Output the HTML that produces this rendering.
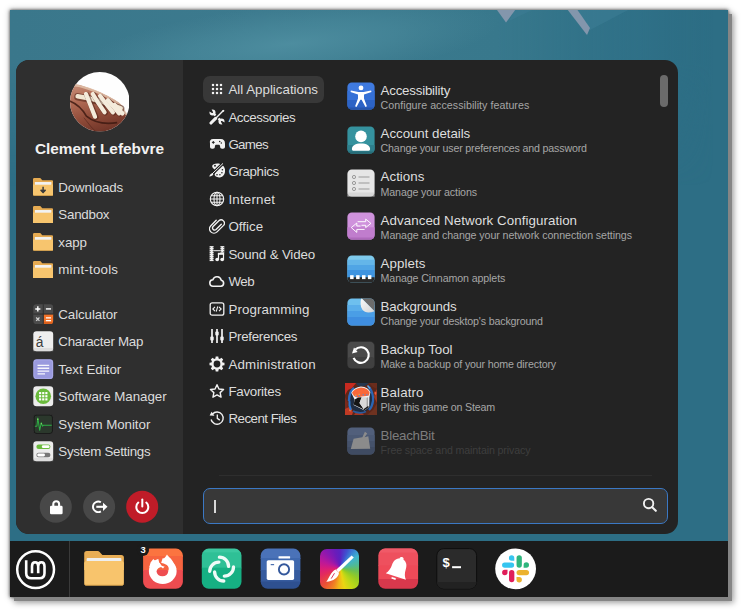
<!DOCTYPE html><html><head><meta charset="utf-8"><title>Cinnamon Menu</title><style>html,body{margin:0;padding:0}
body{width:744px;height:613px;background:#fff;position:relative;overflow:hidden;font-family:"Liberation Sans",sans-serif;}
#shot{position:absolute;left:10px;top:10px;width:718px;height:587px;overflow:hidden;background:#2d6e85;box-shadow:4px 4px 0 #858585,5px 5px 6px 1px rgba(0,0,0,.35),0 0 3px 0 rgba(0,0,0,.7),0 0 6px 1px rgba(0,0,0,.22);}
#abs{position:absolute;left:-10px;top:-10px;width:744px;height:613px}
#abs>*{position:absolute}
#menu{left:16px;top:60px;width:662px;height:474px;border-radius:13px;background:#232323;overflow:hidden}
#side{position:absolute;left:0;top:0;width:167px;height:474px;background:#2f2f2f}
#uname{left:16px;width:167px;top:140px;height:18px;line-height:18px;text-align:center;font-weight:bold;font-size:15.4px;color:#f2f2f2;white-space:nowrap}
.srow{left:33px;height:27.5px;line-height:27.5px;font-size:13.33px;color:#dcdcdc;white-space:nowrap}
.srow svg{position:absolute;left:0;top:3.5px}
.srow span{position:absolute;left:25.3px;top:0.6px}
.crow{left:203px;width:121px;height:27px;line-height:27px;font-size:13.33px;color:#dcdcdc;white-space:nowrap;border-radius:7px}
.crow.sel{background:#383838}
.crow svg{position:absolute;left:5.6px;top:5.6px}
.crow span{position:absolute;left:25.4px;top:0.6px}
.arow{left:344px;width:310px;height:43.2px;color:#dedede;white-space:nowrap}
.arow svg{position:absolute;left:2.5px;top:7.3px}
.arow .t{position:absolute;left:36.6px;top:8px;font-size:13.33px;line-height:15px}
.arow .d{position:absolute;left:36.6px;top:24.2px;font-size:10.67px;line-height:12px;color:#a6a6a6}
.arow.fade .t{color:#7d7d7d}
.arow.fade .d{color:#3e3e3e}
.arow.fade svg{opacity:.6}
#scroll{left:659.7px;top:75.3px;width:8px;height:31.7px;border-radius:4px;background:#6b6b6b}
#sep{left:218.6px;top:475px;width:433px;height:1px;background:#2e2e2e}
#search{left:203px;top:488px;width:463px;height:34px;border:1px solid #3b78c4;border-radius:7px;background:#383838}
#caret{position:absolute;left:10.3px;top:11px;width:1.3px;height:12.5px;background:#d8d8d8}
#search svg{position:absolute;right:7.8px;top:7.4px}
#panel{left:10px;top:541px;width:718px;height:56px;background:#1b1b1b}
#psep{position:absolute;left:59px;top:0;width:1px;height:56px;background:#3a3a3a}
</style></head><body>
<div id="shot"><div id="abs">
<svg style="left:10px;top:10px" width="718" height="587" viewBox="10 10 718 587">
<defs>
<linearGradient id="wg" x1="0" x2="1" y1="0" y2="0"><stop offset="0" stop-color="#3a778b"/><stop offset=".35" stop-color="#3c7a8e"/><stop offset=".68" stop-color="#38788c"/><stop offset=".88" stop-color="#307188" stop-opacity=".7"/><stop offset=".98" stop-color="#2d6e85" stop-opacity="0"/></linearGradient>
<linearGradient id="wv" x1="0" x2="0" y1="0" y2="1"><stop offset="0" stop-color="#fff"/><stop offset=".09" stop-color="#fff"/><stop offset=".3" stop-color="#000"/></linearGradient>
<filter id="wb" x="-20%" y="-20%" width="140%" height="140%"><feGaussianBlur stdDeviation=".45"/></filter>
<mask id="wm"><rect x="10" y="10" width="718" height="587" fill="url(#wv)"/></mask>
<radialGradient id="wl" cx="0.5" cy="0.5" r="0.5"><stop offset="0" stop-color="#4f8fa1" stop-opacity=".9"/><stop offset=".5" stop-color="#4b8b9d" stop-opacity=".55"/><stop offset="1" stop-color="#4a8799" stop-opacity="0"/></radialGradient>
</defs>
<rect x="10" y="10" width="718" height="587" fill="#2d6e85"/>
<rect x="10" y="10" width="718" height="587" fill="url(#wg)" mask="url(#wm)"/>
<ellipse cx="290" cy="44" rx="210" ry="40" fill="url(#wl)" transform="rotate(-6 290 44)"/>
<path d="M577.5 10L628 10L590 30Z" fill="#41809a" opacity=".45"/>
<path d="M515 10L532 10L509 21Z" fill="#41809a" opacity=".35"/>
<path d="M497 10L515.2 10L506 22.6Z" fill="#8396ac" filter="url(#wb)"/>
<path d="M567.8 10L577.5 10L590 28L587 35Z" fill="#8396ac" filter="url(#wb)"/>
</svg>
<div id="menu"><div id="side"></div></div>
<svg style="left:69.5px;top:72.3px" width="59.6" height="59.6" viewBox="0 0 60 60">
<defs><clipPath id="ac"><circle cx="30" cy="30" r="30"/></clipPath>
<linearGradient id="ab" x1="0.2" y1="0" x2="0.6" y2="1"><stop offset="0" stop-color="#c48a74"/><stop offset=".3" stop-color="#b06a54"/><stop offset=".65" stop-color="#8e4a38"/><stop offset="1" stop-color="#6c3226"/></linearGradient></defs>
<g clip-path="url(#ac)">
<rect width="60" height="60" fill="#fefefe"/>
<path d="M-2 11.5Q10 12.5 19 16T30.2 20.5T41.5 26.2T52.8 35.2T60 48V62H-2Z" fill="url(#ab)"/>
<path d="M-2 12.5Q10 13.5 19 17T30.2 21.5T41.5 27.2T52.8 36.2T59 46" stroke="#e2c4ac" stroke-width="2.2" fill="none" opacity=".8"/>
<path d="M-1 29Q10 33 16.5 44.5Q28 54 47.5 51" stroke="#3e1a12" stroke-width="1.7" fill="none" opacity=".85"/>
<path d="M14 46Q22 57 28 62" stroke="#4a2018" stroke-width="1" fill="none" opacity=".5"/>
<path d="M8 25Q30 28.5 51 37" stroke="#4a2016" stroke-width="7.5" fill="none" stroke-linecap="round" opacity=".55"/>
<path d="M7.7 24.5Q30 28 51 36.5" stroke="#f1e6d2" stroke-width="4.6" fill="none" stroke-linecap="round"/>
<g stroke="#4a2016" stroke-width="5.6" stroke-linecap="round" fill="none" opacity=".5">
<path d="M17 23Q21 33 26 45.5"/><path d="M24 23Q29 32 35.5 41"/><path d="M31 25Q37 33 44 41"/><path d="M39 29.5Q44 35 50 42"/>
</g>
<g stroke="#f4ebdb" stroke-width="4.2" stroke-linecap="round" fill="none">
<path d="M16.1 22.2Q20 32 25.2 45"/><path d="M22.9 22.2Q28 31 34.8 40.6"/><path d="M30.2 24Q36 32 43.2 40.6"/><path d="M38.1 28.4Q43 34 49.4 41.6"/><path d="M44.9 33Q48.5 37 52.8 41.8"/>
</g>
</g></svg>
<div id="uname">Clement Lefebvre</div>
<div class="srow" style="top:173.25px"><svg width="20.2" height="17.8" viewBox="0 0 20 17.6" style="top:4.9px">
<path d="M0 1.3Q0 0 1.3 0H7.2L9.2 2.2H18.7Q20 2.2 20 3.5V9H0Z" fill="#e6ab52"/>
<rect x="1.9" y="4.1" width="16.2" height="3" fill="#f2f2f2"/>
<path d="M0 6.3H20V16.3Q20 17.6 18.7 17.6H1.3Q0 17.6 0 16.3Z" fill="#f7c56e"/>
<rect x="1.9" y="4.1" width="16.2" height="2.2" fill="#f2f2f2"/>
<path d="M0 16.3Q0 17.6 1.3 17.6H18.7Q20 17.6 20 16.3V16.6Q20 17 18.7 17H1.3Q0 17 0 16.6Z" fill="#d9a044"/>
<path d="M10 8.6v5.2M7.6 11.8l2.4 2.4 2.4-2.4" stroke="#3b3b3b" stroke-width="1.5" fill="none"/><path d="M7.2 11.6h5.6L10 14.8z" fill="#3b3b3b"/></svg><span style="letter-spacing:-0.139px">Downloads</span></div>
<div class="srow" style="top:200.75px"><svg width="20.2" height="17.8" viewBox="0 0 20 17.6" style="top:4.9px">
<path d="M0 1.3Q0 0 1.3 0H7.2L9.2 2.2H18.7Q20 2.2 20 3.5V9H0Z" fill="#e6ab52"/>
<rect x="1.9" y="4.1" width="16.2" height="3" fill="#f2f2f2"/>
<path d="M0 6.3H20V16.3Q20 17.6 18.7 17.6H1.3Q0 17.6 0 16.3Z" fill="#f7c56e"/>
<rect x="1.9" y="4.1" width="16.2" height="2.2" fill="#f2f2f2"/>
<path d="M0 16.3Q0 17.6 1.3 17.6H18.7Q20 17.6 20 16.3V16.6Q20 17 18.7 17H1.3Q0 17 0 16.6Z" fill="#d9a044"/>
</svg><span style="letter-spacing:-0.232px">Sandbox</span></div>
<div class="srow" style="top:228.25px"><svg width="20.2" height="17.8" viewBox="0 0 20 17.6" style="top:4.9px">
<path d="M0 1.3Q0 0 1.3 0H7.2L9.2 2.2H18.7Q20 2.2 20 3.5V9H0Z" fill="#e6ab52"/>
<rect x="1.9" y="4.1" width="16.2" height="3" fill="#f2f2f2"/>
<path d="M0 6.3H20V16.3Q20 17.6 18.7 17.6H1.3Q0 17.6 0 16.3Z" fill="#f7c56e"/>
<rect x="1.9" y="4.1" width="16.2" height="2.2" fill="#f2f2f2"/>
<path d="M0 16.3Q0 17.6 1.3 17.6H18.7Q20 17.6 20 16.3V16.6Q20 17 18.7 17H1.3Q0 17 0 16.6Z" fill="#d9a044"/>
</svg><span style="letter-spacing:-0.077px">xapp</span></div>
<div class="srow" style="top:255.75px"><svg width="20.2" height="17.8" viewBox="0 0 20 17.6" style="top:4.9px">
<path d="M0 1.3Q0 0 1.3 0H7.2L9.2 2.2H18.7Q20 2.2 20 3.5V9H0Z" fill="#e6ab52"/>
<rect x="1.9" y="4.1" width="16.2" height="3" fill="#f2f2f2"/>
<path d="M0 6.3H20V16.3Q20 17.6 18.7 17.6H1.3Q0 17.6 0 16.3Z" fill="#f7c56e"/>
<rect x="1.9" y="4.1" width="16.2" height="2.2" fill="#f2f2f2"/>
<path d="M0 16.3Q0 17.6 1.3 17.6H18.7Q20 17.6 20 16.3V16.6Q20 17 18.7 17H1.3Q0 17 0 16.6Z" fill="#d9a044"/>
</svg><span style="letter-spacing:0.212px">mint-tools</span></div>
<div class="srow" style="top:300.25px"><svg width="20.5" height="20.5" viewBox="0 0 20 20"><defs><clipPath id="cc"><rect x=".3" y=".3" width="19.4" height="19.4" rx="3.2"/></clipPath></defs>
<g clip-path="url(#cc)"><rect width="20" height="20" fill="#4b4b4b"/><rect x="10.3" y="10" width="10" height="10.5" fill="#f37329"/><rect x="10.3" y="17.6" width="10" height="3" fill="#d9601c"/>
<path d="M0 9.8H20M10 0V20" stroke="#2a2a2a" stroke-width=".9"/></g>
<g stroke="#fff" stroke-width="1.4" fill="none"><path d="M2.2 4.8h5M4.7 2.3v5"/><path d="M12.6 4.8h5"/></g>
<g stroke="#d0d0d0" stroke-width="1.2" fill="none"><path d="M3.1 13.2l3.2 3.2M6.3 13.2l-3.2 3.2"/></g>
<g stroke="#fff" stroke-width="1.2" fill="none"><path d="M12.6 13.6h5M12.6 16.2h5"/></g></svg><span style="letter-spacing:-0.092px">Calculator</span></div>
<div class="srow" style="top:327.75px"><svg width="20.5" height="20.5" viewBox="0 0 20 20"><rect x=".3" y=".3" width="19.4" height="19.4" rx="3.2" fill="#eeeeee" /><rect x=".3" y="16.5" width="19.4" height="3.2" fill="#cfcfcf" opacity=".55"/><text x="6.5" y="15.6" font-family="Liberation Sans, sans-serif" font-size="13.5" fill="#3c3c3c" text-anchor="middle">á</text></svg><span style="letter-spacing:-0.25px">Character Map</span></div>
<div class="srow" style="top:355.25px"><svg width="20.5" height="20.5" viewBox="0 0 20 20"><rect x=".3" y=".3" width="19.4" height="19.4" rx="3.2" fill="#9a9ade" /><rect x=".9" y=".9" width="18.2" height="18.2" rx="2.7" fill="none" stroke="#b4b4ee" stroke-width=".8" opacity=".7"/><path d="M4.4 6.3h11.4M4.4 9h11.4M4.4 11.8h11.4M4.4 14.5h7.3" stroke="#f6f6fc" stroke-width="1.3"/></svg><span>Text Editor</span></div>
<div class="srow" style="top:382.75px"><svg width="20.5" height="20.5" viewBox="0 0 20 20"><rect x=".3" y=".3" width="19.4" height="19.4" rx="3.2" fill="#ececec" /><circle cx="10" cy="10" r="7.6" fill="#6abb3c"/><g fill="#fff"><rect x="5.9" y="5.9" width="2.1" height="2.1"/><rect x="8.95" y="5.9" width="2.1" height="2.1"/><rect x="12" y="5.9" width="2.1" height="2.1"/><rect x="5.9" y="8.95" width="2.1" height="2.1"/><rect x="8.95" y="8.95" width="2.1" height="2.1"/><rect x="12" y="8.95" width="2.1" height="2.1"/><rect x="5.9" y="12" width="2.1" height="2.1"/><rect x="8.95" y="12" width="2.1" height="2.1"/><rect x="12" y="12" width="2.1" height="2.1"/></g></svg><span style="letter-spacing:-0.038px">Software Manager</span></div>
<div class="srow" style="top:410.25px"><svg width="20.5" height="20.5" viewBox="0 0 20 20"><rect x=".3" y=".3" width="19.4" height="19.4" rx="3.2" fill="#161616" stroke="#3c3c3c" stroke-width=".5"/><rect x="1.5" y="1.5" width="17" height="17" rx="2.2" fill="#2b382c"/><path d="M1.8 11.9h2l.9-8 1.8 12 1.6-7.4 1.2 3.4 1-1H18.3" stroke="#2fae45" stroke-width="1" fill="none" stroke-linejoin="round"/><circle cx="4.7" cy="5.2" r=".7" fill="#8ae06a"/><circle cx="8.1" cy="9.4" r=".6" fill="#8ae06a"/></svg><span style="letter-spacing:-0.042px">System Monitor</span></div>
<div class="srow" style="top:437.75px"><svg width="20.5" height="20.5" viewBox="0 0 20 20"><rect x=".3" y=".3" width="19.4" height="19.4" rx="3.2" fill="#ececec" /><rect x=".3" y="16.5" width="19.4" height="3.2" fill="#cfcfcf" opacity=".45"/><rect x="3.3" y="3.4" width="13.7" height="4.3" rx="2.15" fill="#6abb3c"/><rect x="8.6" y="4.2" width="7.6" height="2.7" rx="1.35" fill="#fff"/><rect x="3.3" y="11.5" width="13.7" height="4.3" rx="2.15" fill="#777"/><rect x="4.1" y="12.3" width="7.6" height="2.7" rx="1.35" fill="#fff"/></svg><span style="letter-spacing:-0.287px">System Settings</span></div>
<svg style="left:36px;top:488px" width="130" height="40" viewBox="36 488 130 40">
<circle cx="55.8" cy="506.8" r="16" fill="#484848"/><circle cx="99.1" cy="506.8" r="16" fill="#484848"/><circle cx="142.2" cy="506.8" r="16" fill="#c01c28"/>
<rect x="50" y="505.8" width="12.6" height="8.4" rx="1.3" fill="#fff"/><path d="M53.3 506.5v-2.4a2.9 2.9 0 0 1 5.8 0v2.4" stroke="#fff" stroke-width="2.1" fill="none"/>
<path d="M100.9 502.2a5.3 5.3 0 1 0 0 9.2" stroke="#fff" stroke-width="1.9" fill="none"/><path d="M96.3 506.8h7.4" stroke="#fff" stroke-width="2.1"/><path d="M103 502.7l4.5 4.1-4.5 4.1z" fill="#fff"/>
<path d="M138.3 502.6a6 6 0 1 0 8 0" stroke="#fff" stroke-width="2" fill="none" stroke-linecap="round"/><path d="M142.3 499.4v7" stroke="#fff" stroke-width="2" stroke-linecap="round"/>
</svg>
<div class="crow sel" style="top:75.5px"><svg width="16" height="16" viewBox="0 0 16 16" fill="#f2f2f2"><rect x="2.9" y="2.9" width="2.2" height="2.2"/><rect x="6.9" y="2.9" width="2.2" height="2.2"/><rect x="10.9" y="2.9" width="2.2" height="2.2"/><rect x="2.9" y="6.9" width="2.2" height="2.2"/><rect x="6.9" y="6.9" width="2.2" height="2.2"/><rect x="10.9" y="6.9" width="2.2" height="2.2"/><rect x="2.9" y="10.9" width="2.2" height="2.2"/><rect x="6.9" y="10.9" width="2.2" height="2.2"/><rect x="10.9" y="10.9" width="2.2" height="2.2"/></svg><span>All Applications</span></div>
<div class="crow" style="top:102.95px"><svg width="16" height="16" viewBox="0 0 16 16" fill="#f2f2f2"><path d="M4.4 4.4L11.6 11.6" stroke="#f2f2f2" stroke-width="2.3" fill="none"/><circle cx="3.5" cy="3.5" r="3"/><path d="M3.3 3.3L-.5 1.2 1.2 -.5z" fill="#232323" stroke="#232323" stroke-width="1.5" stroke-linejoin="round"/><circle cx="12.5" cy="12.5" r="3"/><path d="M12.7 12.7L16.5 14.8 14.8 16.5z" fill="#232323" stroke="#232323" stroke-width="1.5" stroke-linejoin="round"/><path d="M1.8 14.2L14.4 1.6" stroke="#232323" stroke-width="4.2" fill="none"/><path d="M2 14L6.6 9.4" stroke="#f2f2f2" stroke-width="3.1" stroke-linecap="round" fill="none"/><path d="M6 10L14.2 1.8" stroke="#f2f2f2" stroke-width="1.4" fill="none"/><path d="M13 1.5l1.5 1.5 1-1.3-.9-.9z"/></svg><span style="letter-spacing:-0.451px">Accessories</span></div>
<div class="crow" style="top:130.4px"><svg width="16" height="16" viewBox="0 0 16 16" fill="#f2f2f2"><path d="M4.2 2.9h7.6c2.7 0 4.2 1.6 4.2 4.6v3c0 1.2-.8 2-2 2h-.9c-1.2 0-2-.8-2-2v-.4c0-.9-.6-1.5-1.5-1.5H7.4c-.9 0-1.5.6-1.5 1.5v.4c0 1.2-.8 2-2 2H3c-1.2 0-2-.8-2-2v-3C.4 4.5 1.5 2.9 4.2 2.9z" transform="translate(0 .2)"/><path d="M2.9 6.4h2.8M4.3 5v2.8" stroke="#232323" stroke-width="1"/><circle cx="10.7" cy="5.6" r=".75" fill="#232323"/><circle cx="12.3" cy="7" r=".75" fill="#232323"/></svg><span style="letter-spacing:-0.674px">Games</span></div>
<div class="crow" style="top:157.85px"><svg width="16" height="16" viewBox="0 0 16 16" fill="#f2f2f2"><path d="M3.2 3C3.2 1.2 5.5 .4 8.2 .4C13 .4 16.1 3.6 16.1 7.6C16.1 11.6 13.4 14.4 10 14.4C7.5 14.4 5.6 13.2 5.6 11.6C5.6 10.4 6.6 9.8 6.6 8.6C6.6 6.4 3.2 5.6 3.2 3Z"/><g fill="#232323"><circle cx="6" cy="2.8" r=".95"/><circle cx="13.4" cy="6.7" r=".8"/><circle cx="12.9" cy="9.8" r=".8"/><circle cx="10.9" cy="11.7" r=".8"/><circle cx="8" cy="11.7" r=".8"/></g><path d="M1.6 12.4L14.6 -.2" stroke="#232323" stroke-width="3"/><path d="M3 11L14 .4" stroke="#f2f2f2" stroke-width="1"/><path d="M.3 13.5C.5 12 1.7 10.7 3.2 10.2L4.3 11.3C3.7 12.7 2.2 13.6 .3 13.5Z"/></svg><span style="letter-spacing:-0.355px">Graphics</span></div>
<div class="crow" style="top:185.3px"><svg width="16" height="16" viewBox="0 0 16 16" fill="#f2f2f2"><g fill="none" stroke="#f2f2f2" stroke-width="1.1"><circle cx="8" cy="8" r="6.7"/><ellipse cx="8" cy="8" rx="3" ry="6.7"/><path d="M8 1.3v13.4M1.3 8h13.4M2.3 4.7h11.4M2.3 11.3h11.4"/></g></svg><span style="letter-spacing:0.212px">Internet</span></div>
<div class="crow" style="top:212.75px"><svg width="16" height="16" viewBox="0 0 16 16" fill="#f2f2f2"><path d="M12.7 6.3L7.3 11.7a2.2 2.2 0 0 1-3.1-3.1l6-6a3.4 3.4 0 0 1 4.8 4.8L8.3 14.1a4.5 4.5 0 0 1-6.4-6.4L7.4 2.2" fill="none" stroke="#f2f2f2" stroke-width="1.4" stroke-linecap="round" transform="translate(0 .2) scale(.97)"/></svg><span style="letter-spacing:0.054px">Office</span></div>
<div class="crow" style="top:240.2px"><svg width="16" height="16" viewBox="0 0 16 16" fill="#f2f2f2"><rect x=".6" y=".1" width="4" height="15"/><rect x="11.4" y=".1" width="3.9" height="6.6"/><path d="M4.6 4.7h6.8" stroke="#f2f2f2" stroke-width="1"/><g fill="#232323"><rect x=".6" y="1" width=".8" height="1"/><rect x="3.8" y="1" width=".8" height="1"/><rect x=".6" y="3" width=".8" height="1"/><rect x="3.8" y="3" width=".8" height="1"/><rect x=".6" y="5" width=".8" height="1"/><rect x="3.8" y="5" width=".8" height="1"/><rect x=".6" y="7" width=".8" height="1"/><rect x="3.8" y="7" width=".8" height="1"/><rect x=".6" y="9" width=".8" height="1"/><rect x="3.8" y="9" width=".8" height="1"/><rect x=".6" y="11" width=".8" height="1"/><rect x="3.8" y="11" width=".8" height="1"/><rect x=".6" y="13" width=".8" height="1"/><rect x="3.8" y="13" width=".8" height="1"/><rect x="11.4" y="1" width=".8" height="1"/><rect x="14.5" y="1" width=".8" height="1"/><rect x="11.4" y="3" width=".8" height="1"/><rect x="14.5" y="3" width=".8" height="1"/><rect x="11.4" y="5" width=".8" height="1"/><rect x="14.5" y="5" width=".8" height="1"/></g><path d="M8.9 6.8h6.2v2H8.9z"/><path d="M9.5 7.3v6M14.5 7.3v6" stroke="#f2f2f2" stroke-width="1.2"/><ellipse cx="8.2" cy="13.5" rx="1.9" ry="1.7"/><ellipse cx="13.2" cy="13.5" rx="1.9" ry="1.7"/></svg><span style="letter-spacing:-0.168px">Sound &amp; Video</span></div>
<div class="crow" style="top:267.65px"><svg width="16" height="16" viewBox="0 0 16 16" fill="#f2f2f2"><path d="M4.4 13.3a3.3 3.3 0 0 1-.5-6.6 4.3 4.3 0 0 1 8.3.5 3.1 3.1 0 0 1-.3 6.1z" fill="none" stroke="#f2f2f2" stroke-width="1.6" stroke-linejoin="round"/></svg><span style="letter-spacing:-0.491px">Web</span></div>
<div class="crow" style="top:295.1px"><svg width="16" height="16" viewBox="0 0 16 16" fill="#f2f2f2"><rect x="1.2" y="1.8" width="13.6" height="12.4" rx="2" fill="none" stroke="#f2f2f2" stroke-width="1.3"/><path d="M6 5.8L3.8 8 6 10.2M10 5.8L12.2 8 10 10.2M8.8 5.4L7.2 10.6" fill="none" stroke="#f2f2f2" stroke-width="1.1"/></svg><span style="letter-spacing:0.109px">Programming</span></div>
<div class="crow" style="top:322.54999999999995px"><svg width="16" height="16" viewBox="0 0 16 16" fill="#f2f2f2"><path d="M3 1v14M8 1v14M13 1v14" stroke="#f2f2f2" stroke-width="1.7"/><rect x="1.3" y="8.6" width="3.4" height="3.8" rx=".9"/><rect x="6.3" y="3.6" width="3.4" height="3.8" rx=".9"/><rect x="11.3" y="8.6" width="3.4" height="3.8" rx=".9"/></svg><span style="letter-spacing:-0.28px">Preferences</span></div>
<div class="crow" style="top:350px"><svg width="16" height="16" viewBox="0 0 16 16" fill="#f2f2f2"><path fill-rule="evenodd" d="M6.71 0.51L9.29 0.51L9.6 2.43L10.81 2.93L12.39 1.79L14.21 3.61L13.07 5.19L13.57 6.4L15.49 6.71L15.49 9.29L13.57 9.6L13.07 10.81L14.21 12.39L12.39 14.21L10.81 13.07L9.6 13.57L9.29 15.49L6.71 15.49L6.4 13.57L5.19 13.07L3.61 14.21L1.79 12.39L2.93 10.81L2.43 9.6L0.51 9.29L0.51 6.71L2.43 6.4L2.93 5.19L1.79 3.61L3.61 1.79L5.19 2.93L6.4 2.43Z M8 4.6a3.4 3.4 0 1 0 0 6.8a3.4 3.4 0 1 0 0-6.8z"/></svg><span style="letter-spacing:0.21px">Administration</span></div>
<div class="crow" style="top:377.45px"><svg width="16" height="16" viewBox="0 0 16 16" fill="#f2f2f2"><path d="M8 1.7L9.94 5.93L14.56 6.47L11.14 9.62L12.06 14.18L8 11.9L3.94 14.18L4.86 9.62L1.44 6.47L6.06 5.93Z" fill="none" stroke="#f2f2f2" stroke-width="1.4" stroke-linejoin="round"/></svg><span style="letter-spacing:-0.268px">Favorites</span></div>
<div class="crow" style="top:404.9px"><svg width="16" height="16" viewBox="0 0 16 16" fill="#f2f2f2"><path d="M3.4 4.2a6.1 6.1 0 1 1-1.3 5.3" fill="none" stroke="#f2f2f2" stroke-width="1.4"/><path d="M.6 5.6l4.8.2L2.6 1.7z"/><path d="M8.3 4.6v3.8l2.5 1.7" fill="none" stroke="#f2f2f2" stroke-width="1.3"/></svg><span style="letter-spacing:-0.515px">Recent Files</span></div>
<div class="arow" style="top:75.2px"><svg width="28" height="28" viewBox="0 0 28 28"><defs><clipPath id="k1"><rect x=".4" y=".4" width="27.2" height="27.2" rx="4.5"/></clipPath></defs><g clip-path="url(#k1)"><rect width="28" height="28" fill="#3f7ae0"/><rect y="9" width="28" height="9" fill="#3570d6"/><rect y="18" width="28" height="10" fill="#2c63c6"/><rect y="25.5" width="28" height="3" fill="#2555ad"/></g><circle cx="14" cy="5.9" r="2.4" fill="#fff"/><path d="M3.9 8.5L11.5 10.1H16.5L24.1 8.5L24.5 10.1L17 12.5V16.4L19.9 24.3L18.5 24.9L14.6 17.8H13.4L9.5 24.9L8.1 24.3L11 16.4V12.5L3.5 10.1Z" fill="#fff"/></svg><div class="t" style="letter-spacing:-0.23px">Accessibility</div><div class="d" style="letter-spacing:0.038px">Configure accessibility features</div></div>
<div class="arow" style="top:118.3px"><svg width="28" height="28" viewBox="0 0 28 28"><defs><clipPath id="k2"><rect x=".4" y=".4" width="27.2" height="27.2" rx="4.5"/></clipPath></defs><g clip-path="url(#k2)"><rect width="28" height="28" fill="#35929e"/><rect y="19" width="28" height="9" fill="#2e7f8c"/><rect y="25.5" width="28" height="3" fill="#276c78"/></g><circle cx="14" cy="10.4" r="5.8" fill="#fff"/><path d="M4.9 23c0-3.6 3.6-5.6 9.1-5.6s9.1 2 9.1 5.6c0 1.2-.6 1.8-1.8 1.8H6.7c-1.2 0-1.8-.6-1.8-1.8z" fill="#fff"/></svg><div class="t" style="letter-spacing:-0.053px">Account details</div><div class="d" style="letter-spacing:-0.172px">Change your user preferences and password</div></div>
<div class="arow" style="top:161.4px"><svg width="28" height="28" viewBox="0 0 28 28"><rect x=".4" y=".4" width="27.2" height="27.2" rx="4.5" fill="#e6e6e6" /><rect x=".4" y="23.5" width="27.2" height="4.1" fill="#d0d0d0" opacity=".7"/><g fill="none" stroke="#9a9a9a" stroke-width="1"><circle cx="7" cy="8" r="1.6"/><circle cx="7" cy="14" r="1.6"/><circle cx="7" cy="20" r="1.6"/><path d="M11.5 8h11M11.5 14h11M11.5 20h11"/></g></svg><div class="t">Actions</div><div class="d" style="letter-spacing:-0.139px">Manage your actions</div></div>
<div class="arow" style="top:204.6px"><svg width="28" height="28" viewBox="0 0 28 28"><defs><clipPath id="k4"><rect x=".4" y=".4" width="27.2" height="27.2" rx="4.5"/></clipPath></defs><g clip-path="url(#k4)"><rect width="28" height="28" fill="#cf92dc"/><rect y="15.3" width="28" height="13" fill="#c07dcd"/><rect y="25.5" width="28" height="3" fill="#ae6abb"/></g><g fill="none" stroke="#fff" stroke-width=".95" stroke-linejoin="round"><path d="M10.6 9.7H18.7V7.1L23.9 11.4L18.7 15.6V13.3H14.5"/><path d="M17.6 17.4H9.8V20.4L4.3 15.6L9.8 11V14H13.5"/></g></svg><div class="t" style="letter-spacing:0.055px">Advanced Network Configuration</div><div class="d" style="letter-spacing:-0.079px">Manage and change your network connection settings</div></div>
<div class="arow" style="top:247.7px"><svg width="28" height="28" viewBox="0 0 28 28"><defs><clipPath id="k5"><rect x=".4" y=".4" width="27.2" height="27.2" rx="4.5"/></clipPath></defs><g clip-path="url(#k5)"><rect width="28" height="28" fill="#7ecaec"/><rect y="4.8" width="28" height="5.3" fill="#64b6e9"/><rect y="10" width="28" height="5" fill="#50a5e5"/><rect y="15" width="28" height="8" fill="#3e94e0"/><path d="M0 22.3H28V28H0Z" fill="#292929"/></g><g fill="#fff"><rect x="3.1" y="20.2" width="3.5" height="3.9"/><rect x="9.1" y="20.2" width="3.5" height="3.9"/><rect x="15" y="20.2" width="3.5" height="3.9"/><rect x="20.9" y="20.2" width="3.5" height="3.9"/></g></svg><div class="t" style="letter-spacing:0.047px">Applets</div><div class="d" style="letter-spacing:-0.121px">Manage Cinnamon applets</div></div>
<div class="arow" style="top:290.8px"><svg width="28" height="28" viewBox="0 0 28 28"><defs><clipPath id="k6"><rect x=".4" y=".4" width="27.2" height="27.2" rx="4.5"/></clipPath><linearGradient id="g6" x1="0" y1="0" x2="1" y2="1"><stop offset="0" stop-color="#fafafa"/><stop offset="1" stop-color="#d4d4d4"/></linearGradient></defs><g clip-path="url(#k6)"><rect width="28" height="28" fill="#6ec0ee"/><rect y="7" width="28" height="6" fill="#5aaeea"/><rect y="13" width="28" height="6" fill="#4a9ee6"/><rect y="19" width="28" height="9" fill="#3f8ee0"/><path d="M14.3 0H28V13.8Z" fill="#6c6c6c"/><path d="M14.3 0L27.6 13.2Q19 16.4 15.3 11.6Q12.3 7.2 14.3 0Z" fill="url(#g6)"/></g></svg><div class="t" style="letter-spacing:-0.163px">Backgrounds</div><div class="d" style="letter-spacing:-0.16px">Change your desktop's background</div></div>
<div class="arow" style="top:333.9px"><svg width="28" height="28" viewBox="0 0 28 28"><rect x=".4" y=".4" width="27.2" height="27.2" rx="4.5" fill="#4a4a4a" stroke="#2c2c2c" stroke-width=".6"/><rect x=".7" y="16" width="26.6" height="11.3" rx="3" fill="#3e3e3e" opacity=".85"/><path d="M6.6 16.8A7.8 7.8 0 1 0 8.3 8.6" fill="none" stroke="#fff" stroke-width="2.2"/><path d="M5 12.6L10.6 11 7 6.6z" fill="#fff"/></svg><div class="t" style="letter-spacing:-0.043px">Backup Tool</div><div class="d" style="letter-spacing:-0.162px">Make a backup of your home directory</div></div>
<div class="arow" style="top:377px"><svg width="32" height="32" viewBox="0 0 32 32" style="left:.9px;top:5.9px">
<rect width="32" height="32" fill="#5c2619"/>
<path d="M0 0H11L7 5L3 7L0 12Z" fill="#c62a20"/><path d="M11 0H24L20 3L13 3Z" fill="#24364e"/><path d="M24 0H32V6L28 4Z" fill="#6a2c1c"/>
<path d="M32 6V20L29 14L30 9Z" fill="#9a3a22"/><path d="M32 20V32H22L28 27Z" fill="#6e3220"/><path d="M29.5 8.5L31.5 9.5L31 12L29.5 11Z" fill="#f05a3a"/>
<path d="M0 14L3 20L2 27L0 30Z" fill="#7a2a1c"/><path d="M0 26L4 24L8 29L7 32H0Z" fill="#c03a24"/><path d="M9 32L12 28L17 30L19 32Z" fill="#a8341e"/><path d="M4.5 25.5L6.5 26L6 28.5L4 28Z" fill="#f0703a"/>
<ellipse cx="15.8" cy="16.5" rx="12" ry="13" fill="#1f2c40"/>
<path d="M4 18C4 12 6 7 9 5" stroke="#2a6cc0" stroke-width="2.4" fill="none"/><path d="M6 27C4.5 24 4 21 4.5 18" stroke="#2f78cc" stroke-width="2" fill="none"/>
<path d="M24 4C27 8 28.5 13 28 18C27.5 22 26 25 24 27" stroke="#2a66b4" stroke-width="2.2" fill="none"/><path d="M22.5 2.5L25 5.5" stroke="#5aa8e8" stroke-width="1.6"/>
<path d="M8 28C11 30 17 30.5 21 28.5" stroke="#2a5a9c" stroke-width="1.8" fill="none"/>
<path d="M6.2 9.7Q8.8 4.5 15.9 3.5Q23.5 4.2 25.4 9.3L24.4 14.5L24.2 24L19.6 27.6L8.6 22L9.6 16.5Z" fill="#eef2f6"/>
<path d="M7 9.7Q9.5 5.5 15.9 4.5Q22.8 5.2 24.6 9.3Q24.5 11.7 23.5 12.8L16.7 13.5L12.3 14.6Q9.8 14 8.8 12.8Z" fill="#f8683a"/>
<path d="M9.8 16.5L13.1 14.6L16.7 14.2L14.5 20.1L18.8 26.6L15.9 25.1L8.6 21.5Z" fill="#151515"/>
<path d="M16.7 14.2H23.1V23.7L19.5 26.6L14.5 20.1Z" fill="#d8d8d8"/><path d="M21.6 15V24.7L23.1 23.7V14.2Z" fill="#a4a4a4"/>
<path d="M18.8 26.9L23.5 23.5" stroke="#151515" stroke-width="1.4"/>
<g fill="#5a8ad8"><rect x="10.8" y="12.7" width="1.3" height="1.3"/><rect x="13.8" y="11.7" width="1.3" height="1.3"/><rect x="17.6" y="11.1" width="1.3" height="1.3"/><rect x="21.2" y="11.1" width="1.3" height="1.3"/></g>
<g fill="#f4c83a"><rect x="10.3" y="11.7" width="1" height="1"/><rect x="13.6" y="10.8" width="1" height="1"/></g>
</svg><div class="t" style="letter-spacing:0.095px">Balatro</div><div class="d" style="letter-spacing:-0.177px">Play this game on Steam</div></div>
<div class="arow fade" style="top:420.2px"><svg width="28" height="28" viewBox="0 0 28 28"><defs><clipPath id="k9"><rect x=".4" y=".4" width="27.2" height="27.2" rx="4.5"/></clipPath></defs><g clip-path="url(#k9)"><rect width="28" height="28" fill="#7088b6"/><rect y="8" width="28" height="6" fill="#677eaa"/><rect y="14" width="28" height="6" fill="#5d729c"/><rect y="20" width="28" height="8" fill="#52668c"/></g><path d="M17.9 4.7L20.2 6.6L17.6 10.2L21.3 9.2L23.2 21.7L3.8 22L6.6 11.7L15.4 10.2Z" fill="#d0d0d0"/></svg><div class="t" style="letter-spacing:-0.279px">BleachBit</div><div class="d" style="letter-spacing:-0.136px">Free space and maintain privacy</div></div>
<div id="scroll"></div><div id="sep"></div>
<div id="search"><div id="caret"></div><svg width="18" height="18" viewBox="0 0 18 18"><circle cx="7.6" cy="7.6" r="4.7" fill="none" stroke="#f0f0f0" stroke-width="1.9"/><path d="M11.2 11.2l3.6 3.6" stroke="#f0f0f0" stroke-width="2.1" stroke-linecap="round"/></svg></div>
<div id="panel"><div id="psep"></div></div>
<div style="left:319.5px;top:548.6px;width:39.6px;height:40.2px;border-radius:7px;background:conic-gradient(from 0deg at 52% 48%,#5a22c0 0deg,#3f52d0 22deg,#3a8ad4 40deg,#3fb4cc 55deg,#4fba98 78deg,#6cc050 100deg,#96cc24 122deg,#bcd818 145deg,#ead612 168deg,#f2b41a 185deg,#f08422 200deg,#ea5234 222deg,#e42c5a 248deg,#d81c7c 270deg,#b8189c 292deg,#8c18b0 318deg,#6a1cba 342deg,#5a22c0 360deg)"></div>
<svg style="left:10px;top:541px" width="718" height="56" viewBox="10 541 718 56">
<defs>
<clipPath id="pf"><rect x="143.1" y="548.6" width="39.8" height="40.2" rx="7"/></clipPath>
<clipPath id="pe"><rect x="201.8" y="548.6" width="39.7" height="40.2" rx="7"/></clipPath>
<clipPath id="pc"><rect x="260.7" y="548.6" width="39.7" height="40.2" rx="7"/></clipPath>
<clipPath id="pb"><rect x="378.3" y="548.6" width="39.8" height="40.2" rx="7"/></clipPath>
<clipPath id="pt"><rect x="436.8" y="548.6" width="39.8" height="40.2" rx="7"/></clipPath>
</defs>
<!-- mint logo -->
<g fill="none" stroke="#fff">
<circle cx="35.6" cy="569.6" r="18.4" stroke-width="2.5"/>
<path d="M26.2 560.2V573.3Q26.2 578.3 31.2 578.3H39.5Q44.5 578.3 44.5 573.3V566.3Q44.5 562.3 41.35 562.3Q38.2 562.3 38.2 566.3V573.2M38.2 566.3Q38.2 562.3 35.1 562.3Q32 562.3 32 566.3V573.2" stroke-width="2.6"/>
</g>
<!-- folder -->
<path d="M84.2 553.6Q84.2 551 86.8 551H97.6Q98.8 551 99.6 551.9L102.4 555H121.3Q123.9 555 123.9 557.6V570H84.2Z" fill="#e8ad55"/>
<rect x="86.6" y="558" width="34.8" height="6" rx="1" fill="#eeeeee"/>
<path d="M84.2 563.6Q84.2 561 86.8 561H121.3Q123.9 561 123.9 563.6V583Q123.9 585.6 121.3 585.6H86.8Q84.2 585.6 84.2 583Z" fill="#f8c46c"/>
<path d="M84.2 582.4V583Q84.2 585.6 86.8 585.6H121.3Q123.9 585.6 123.9 583V582.4Q123.9 584.8 121.3 584.8H86.8Q84.2 584.8 84.2 582.4Z" fill="#dca146"/>
<!-- firefox -->
<g clip-path="url(#pf)"><rect x="142" y="548" width="42" height="9" fill="#fb7440"/><rect x="142" y="556" width="42" height="15" fill="#f6643f"/><rect x="142" y="570" width="42" height="20" fill="#ee4c50"/></g>
<ellipse cx="162.75" cy="571.1" rx="13.9" ry="12.8" fill="#fff"/>
<path d="M149.3 567L150.6 562.5L153.3 559L155.8 561.6L157.6 559.8L160 563.2L163 566Z" fill="#fff"/>
<path d="M161.3 562.6C163 559 165.5 557.5 167 554.6C168.5 557.2 171.8 558.8 173.6 563L176.4 569L165 567Z" fill="#fff"/>
<linearGradient id="ffg" gradientUnits="userSpaceOnUse" x1="0" y1="569.9" x2="0" y2="570.1"><stop offset="0" stop-color="#f6643f"/><stop offset="1" stop-color="#ee4c50"/></linearGradient>
<ellipse cx="162.4" cy="571.6" rx="5.8" ry="4.7" fill="url(#ffg)"/>
<path d="M159.6 562.5C162 563.6 165.5 563.2 167.8 566C169 567.6 169 569.4 168.2 571L164.6 568.6C164.2 566.6 162.6 566 161.4 565.4Z" fill="#f6643f"/>
<path d="M160.6 566.4L164.6 566.6L163 568.4Z" fill="#fff"/>
<path d="M157.9 557.4L162.8 557.4L161.6 561.6L160.9 563.6L159.3 562.7Z" fill="#f6643f"/>
<circle cx="142.9" cy="549.9" r="6.1" fill="#1b1b1b"/>
<text x="143" y="553.3" font-family="Liberation Sans, sans-serif" font-size="9.4" font-weight="bold" fill="#fff" text-anchor="middle">3</text>
<!-- element -->
<g clip-path="url(#pe)"><rect x="201" y="548" width="41" height="5" fill="#3cc8a0"/><rect x="201" y="552.4" width="41" height="16" fill="#2fc096"/><rect x="201" y="567.7" width="41" height="22" fill="#16b083"/></g>
<g fill="none" stroke="#f0fbf7" stroke-width="3.3" stroke-linecap="round">
<path id="earc" d="M219.4 557.2A9.2 9.2 0 0 1 228.6 566.4"/>
<use href="#earc" transform="rotate(90 221.6 569.1)"/><use href="#earc" transform="rotate(180 221.6 569.1)"/><use href="#earc" transform="rotate(270 221.6 569.1)"/>
</g>
<!-- camera -->
<g clip-path="url(#pc)"><rect x="260" y="548" width="41" height="11" fill="#4a72b8"/><rect x="260" y="558" width="41" height="13" fill="#3f68ae"/><rect x="260" y="570" width="41" height="12" fill="#365b9e"/><rect x="260" y="581.5" width="41" height="8" fill="#2e5090"/></g>
<rect x="266.7" y="560.2" width="27.4" height="19.7" rx="1.6" fill="#fff"/><rect x="278.5" y="556.2" width="11.6" height="2.3" rx=".5" fill="#fff"/>
<circle cx="284" cy="569.4" r="5.1" fill="none" stroke="#34589c" stroke-width="1.9"/><rect x="270.7" y="564.1" width="3.4" height="1.1" fill="#3a62a8"/>
<!-- drawing brush -->
<path d="M351.6 555.6L353.8 557.4L338.6 572.2L336.2 569.7Z" fill="#fff"/>
<path d="M335.6 569.4L339 572.8C338.6 577.5 333.5 581.2 326.2 581.8C329.2 578.2 330.6 571.8 335.6 569.4Z" fill="#fff"/>
<path d="M334.5 573.2L331.2 578.6" stroke="#d83a60" stroke-width="1" fill="none"/>
<!-- bell -->
<g clip-path="url(#pb)"><rect x="378" y="548" width="41" height="18" fill="#ee505e"/><rect x="378" y="548" width="41" height="4.6" fill="#f05a68"/><rect x="378" y="565.4" width="41" height="14" fill="#ee4a58"/><rect x="378" y="579" width="41" height="10" fill="#d8384c"/></g>
<g transform="translate(398.5 568.3) rotate(18)" fill="#fff"><path d="M0 -11.8C-1.3 -11.8 -2.1 -10.9 -2.1 -9.7C-5.6 -8.6 -7.2 -5.4 -7.2 -1.6C-7.2 3.2 -8.4 6 -10.6 8.6H10.6C8.4 6 7.2 3.2 7.2 -1.6C7.2 -5.4 5.6 -8.6 2.1 -9.7C2.1 -10.9 1.3 -11.8 0 -11.8Z"/><rect x="-3.8" y="10.3" width="4.6" height="1.7" rx=".85"/></g>
<!-- terminal -->
<rect x="436.8" y="548.6" width="39.8" height="40.2" rx="7" fill="#2b2b2b" stroke="#0e0e0e" stroke-width="1"/>
<g clip-path="url(#pt)"><rect x="437" y="582" width="41" height="8" fill="#222"/></g>
<text x="442.3" y="566.6" font-family="Liberation Mono, monospace" font-size="13" font-weight="bold" fill="#fff">$</text><rect x="452.1" y="566.2" width="8.9" height="2" fill="#fff"/>
<!-- slack -->
<circle cx="515.6" cy="568.8" r="20.4" fill="#fff"/>
<g stroke-width="5.3" stroke-linecap="round" fill="none">
<path d="M504.7 565.1H511.5" stroke="#36c5f0"/><path d="M519.2 557.8V565.1" stroke="#2eb67d"/><path d="M519.2 572.6H526.4" stroke="#ecb22e"/><path d="M511.7 572.6V579.6" stroke="#e01e5a"/>
</g>
<path d="M511.6 555.3a2.7 2.7 0 1 0 0 5.4h2.7v-2.7a2.7 2.7 0 0 0-2.7-2.7z" fill="#36c5f0"/>
<path d="M529 565a2.7 2.7 0 1 0-5.4 0v2.7h2.7A2.7 2.7 0 0 0 529 565z" fill="#2eb67d"/>
<path d="M519.2 582.4a2.7 2.7 0 1 0 0-5.4h-2.7v2.7a2.7 2.7 0 0 0 2.7 2.7z" fill="#ecb22e"/>
<path d="M502.1 572.5a2.7 2.7 0 1 0 5.4 0v-2.7h-2.7a2.7 2.7 0 0 0-2.7 2.7z" fill="#e01e5a"/>
</svg>
</div></div></body></html>
